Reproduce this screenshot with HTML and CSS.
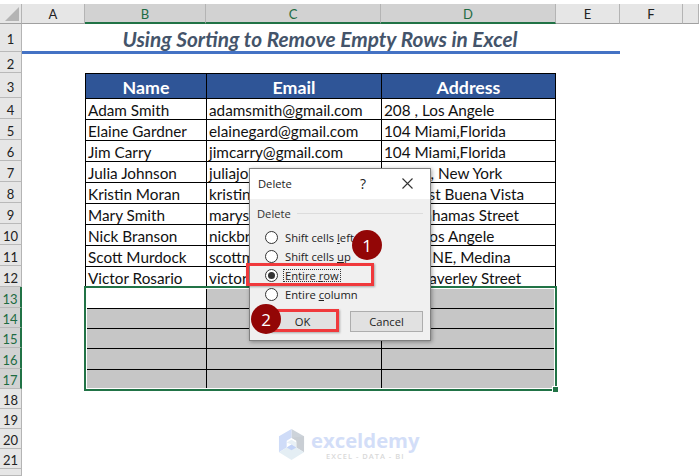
FILE: index.html
```html
<!DOCTYPE html>
<html lang="en">
<head>
<meta charset="utf-8">
<title>Using Sorting to Remove Empty Rows in Excel</title>
<link rel="stylesheet" href="styles.css">
</head>
<body>
<div class="sheet">
  <div class="grid">
    <div class="corner"><svg class="corner-mark" width="14" height="14" viewBox="0 0 14 14"><path d="M14 0V14H0Z" fill="#b4b4b4"/></svg></div>
    <div class="ch">A</div><div class="ch on">B</div><div class="ch on">C</div><div class="ch on">D</div><div class="ch">E</div><div class="ch">F</div><div class="ch"></div>

    <div class="rh">1</div>
    <div class="title-cell">Using Sorting to Remove Empty Rows in Excel</div>
    <div class="blank"></div><div class="blank"></div>

    <div class="rh">2</div><div class="blank wide"></div>

    <div class="rh">3</div><div class="blank"></div>
    <div class="th">Name</div><div class="th">Email</div><div class="th end">Address</div><div class="blank tail"></div>

    <div class="rh">4</div><div class="blank"></div><div class="td">Adam Smith</div><div class="td">adamsmith@gmail.com</div><div class="td end">208 , Los Angele</div><div class="blank tail"></div>
    <div class="rh">5</div><div class="blank"></div><div class="td">Elaine Gardner</div><div class="td">elainegard@gmail.com</div><div class="td end">104 Miami,Florida</div><div class="blank tail"></div>
    <div class="rh">6</div><div class="blank"></div><div class="td">Jim Carry</div><div class="td">jimcarry@gmail.com</div><div class="td end">104 Miami,Florida</div><div class="blank tail"></div>
    <div class="rh">7</div><div class="blank"></div><div class="td">Julia Johnson</div><div class="td">juliajohnson@gmail.com</div><div class="td end">4 Main, New York</div><div class="blank tail"></div>
    <div class="rh">8</div><div class="blank"></div><div class="td">Kristin Moran</div><div class="td">kristinmoran@gmail.com</div><div class="td end">10 West Buena Vista</div><div class="blank tail"></div>
    <div class="rh">9</div><div class="blank"></div><div class="td">Mary Smith</div><div class="td">marysmith@gmail.com</div><div class="td end">135 Bahamas Street</div><div class="blank tail"></div>
    <div class="rh">10</div><div class="blank"></div><div class="td">Nick Branson</div><div class="td">nickbranson@gmail.com</div><div class="td end">208 , Los Angele</div><div class="blank tail"></div>
    <div class="rh">11</div><div class="blank"></div><div class="td">Scott Murdock</div><div class="td">scottmurdock@gmail.com</div><div class="td end">17125 NE, Medina</div><div class="blank tail"></div>
    <div class="rh">12</div><div class="blank"></div><div class="td">Victor Rosario</div><div class="td">victorrosario@gmail.com</div><div class="td end">120 Waverley Street</div><div class="blank tail"></div>

    <div class="rh on">13</div><div class="blank"></div><div class="td first"></div><div class="td sel"></div><div class="td sel end"></div><div class="blank tail"></div>
    <div class="rh on">14</div><div class="blank"></div><div class="td sel"></div><div class="td sel"></div><div class="td sel end"></div><div class="blank tail"></div>
    <div class="rh on">15</div><div class="blank"></div><div class="td sel"></div><div class="td sel"></div><div class="td sel end"></div><div class="blank tail"></div>
    <div class="rh on">16</div><div class="blank"></div><div class="td sel"></div><div class="td sel"></div><div class="td sel end"></div><div class="blank tail"></div>
    <div class="rh on">17</div><div class="blank"></div><div class="td sel"></div><div class="td sel"></div><div class="td sel end"></div><div class="blank tail"></div>

    <div class="rh">18</div><div class="blank wide"></div>
    <div class="rh">19</div><div class="blank wide"></div>
    <div class="rh">20</div><div class="blank wide"></div>
    <div class="rh">21</div><div class="blank wide"></div>
    <div class="rh"></div><div class="blank wide"></div>
  </div>

  <div class="selection"><span class="handle"></span></div>

  <div class="dialog">
    <div class="dlg-title">
      <span class="dlg-name">Delete</span>
      <span class="dlg-help">?</span>
      <svg class="dlg-close" width="11" height="11" viewBox="0 0 11 11"><path d="M.5 .5L10.5 10.5M10.5 .5L.5 10.5" stroke="#333" stroke-width="1.1" fill="none"/></svg>
    </div>
    <div class="dlg-body">
      <div class="group"><span>Delete</span><i></i></div>
      <div class="radios">
        <label class="radio"><b class="dot"></b><span>Shift cells <u>l</u>eft</span></label>
        <label class="radio"><b class="dot"></b><span>Shift cells <u>u</u>p</span></label>
        <label class="radio"><b class="dot checked"></b><span class="focus">Entire <u>r</u>ow</span></label>
        <label class="radio"><b class="dot"></b><span>Entire <u>c</u>olumn</span></label>
      </div>
      <div class="buttons">
        <button class="btn ok">OK</button>
        <button class="btn">Cancel</button>
      </div>
    </div>
  </div>

  <div class="mark mark-row"></div>
  <div class="mark mark-ok"></div>
  <div class="badge badge-1">1</div>
  <div class="badge badge-2">2</div>

  <div class="watermark">
    <svg width="27" height="31" viewBox="0 0 28 32">
      <path d="M14 0L27 7.5V16L14 9Z" fill="#cdd3da"/>
      <path d="M14 0L1 7.5V24L9 19V12L14 9Z" fill="#cfdcf8"/>
      <path d="M27 7.5V24L19 19V12L14 9Z" fill="#c9ced4"/>
      <path d="M1 24L14 32L27 24L14 16Z" fill="#e4eef4"/>
      <path d="M9 14L14 11L19 14V19L14 16Z" fill="#e8f0f6"/>
      <path d="M9 19L14 16L19 19L14 22Z" fill="#c3d3f7"/>
    </svg>
    <div class="wm-text">
      <span class="wm-name">exceldemy</span>
      <span class="wm-sub">EXCEL - DATA - BI</span>
    </div>
  </div>
</div>
</body>
</html>
```
FILE: styles.css
```css
* { box-sizing: border-box; }
html, body { margin: 0; padding: 0; background: #fff; }
body { width: 699px; height: 476px; overflow: hidden; }
.sheet { position: relative; width: 699px; height: 476px; padding-top: 4px; font-family: "Lato", "Liberation Sans", sans-serif; }
.grid {
  display: grid;
  grid-template-columns: 22px 63px 121px 175px 175px 64px 63px 16px;
  grid-template-rows: 20px 28px 21px 25px repeat(9, 21px) 21px 20px 20px 21px 20px 20px 20px 20px 20px 7px;
}
.corner { background: #e6e6e6; border-right: 1px solid #b4b4b4; border-bottom: 1px solid #a0a0a0; display: flex; align-items: flex-end; justify-content: flex-end; padding: 0 2px 2px 0; }
.ch { background: #e6e6e6; border-right: 1px solid #b4b4b4; border-bottom: 1px solid #a0a0a0; display: flex; align-items: center; justify-content: center; font-size: 13px; color: #222; padding-top: 1px; }
.ch.on { background: #d2d2d2; color: #1d6b42; border-bottom: 2px solid #217346; padding-top: 2px; }
.rh { grid-column: 1; background: #e6e6e6; border-right: 1px solid #b4b4b4; border-bottom: 1px solid #b9b9b9; display: flex; align-items: center; justify-content: center; font-size: 13px; color: #222; padding-top: 3px; }
.rh.on { background: #d2d2d2; color: #1d6b42; border-right: 2px solid #217346; }
.blank.wide { grid-column: 2 / -1; }
.blank.tail { grid-column: 6 / -1; }
.title-cell { grid-column: 2 / 7; margin-bottom: -2px; border-bottom: 3px solid #4472c4; display: flex; align-items: center; justify-content: center; font-size: 20.8px; font-weight: 700; font-style: italic; color: #44546a; padding: 2px 2px 0 0; }
.th { background: #2f5597; color: #fff; border-top: 1px solid #000; border-left: 1px solid #000; display: flex; align-items: center; justify-content: center; font-size: 17.8px; font-weight: 700; padding-top: 1px; }
.td { border-top: 1px solid #000; border-left: 1px solid #000; font-size: 15.3px; line-height: 20px; padding: 1px 0 0 2px; color: #111; white-space: nowrap; overflow: hidden; }
.end { border-right: 1px solid #000; }
.td.sel { background: #c6c6c6; }
.td.first { background: #fff; }

.selection { position: absolute; left: 84px; top: 286px; width: 473px; height: 105px; border: 2px solid #217346; box-shadow: inset 0 0 0 1px #fff; }
.handle { position: absolute; right: -3px; bottom: -3px; width: 6px; height: 6px; background: #217346; border-top: 1px solid #fff; border-left: 1px solid #fff; }

.dialog { position: absolute; left: 249px; top: 168px; width: 182px; height: 173px; background: #f0f0f0; border: 1px solid #808080; box-shadow: 1px 1px 4px rgba(0,0,0,.35); font-family: "Open Sans", "Noto Sans", sans-serif; font-size: 11.2px; color: #222; display: flex; flex-direction: column; }
.dlg-title { height: 30px; flex: none; background: #fff; display: flex; align-items: center; padding: 0 17px 2px 8px; }
.dlg-name { flex: 1; }
.dlg-help { font-size: 14px; margin-right: 36px; }
.dlg-body { flex: 1; padding: 7px 7px 0 7px; display: flex; flex-direction: column; }
.group { display: flex; align-items: center; gap: 6px; height: 14px; color: #333; }
.group i { flex: 1; height: 1px; background: #dcdcdc; }
.radios { display: flex; flex-direction: column; margin: 8px 0 0 8px; }
.radio { height: 19px; display: flex; align-items: center; gap: 5px; }
.radio span { padding: 0 2px; }
.radio .focus { outline: 1px dotted #333; outline-offset: -1px; line-height: 13px; }
.dot { width: 13px; height: 13px; border-radius: 50%; background: #fff; border: 1px solid #333; position: relative; display: block; flex: none; }
.dot.checked::after { content: ""; position: absolute; left: 2px; top: 2px; width: 7px; height: 7px; border-radius: 50%; background: #333; }
.buttons { display: flex; gap: 11px; margin: 7px 0 0 9px; }
.btn { width: 73px; height: 21px; padding: 0; background: #e1e1e1; border: 1px solid #adadad; font: inherit; color: #222; }
.btn.ok { border: 1px solid #0078d7; }

.mark { position: absolute; border: 3px solid #f0393c; box-shadow: 1px 1px 2px rgba(0,0,0,.3); }
.mark-row { left: 246px; top: 263px; width: 128px; height: 23px; }
.mark-ok { left: 270px; top: 309px; width: 69px; height: 23px; }
.badge { position: absolute; width: 30px; height: 30px; border-radius: 50%; background: #930606; color: #fff; font-family: "Open Sans", sans-serif; font-size: 17px; display: flex; align-items: center; justify-content: center; }
.badge-1 { left: 352px; top: 230px; }
.badge-2 { left: 251px; top: 304px; }

.watermark { position: absolute; left: 278px; top: 429px; display: flex; gap: 6px; }
.wm-text { display: flex; flex-direction: column; font-family: "Open Sans", sans-serif; }
.wm-name { font-size: 20.3px; line-height: 23px; font-weight: 700; color: #d3def8; }
.wm-sub { font-size: 7.5px; line-height: 9px; letter-spacing: 1px; font-weight: 600; color: #d9d9d9; text-align: center; }
```
